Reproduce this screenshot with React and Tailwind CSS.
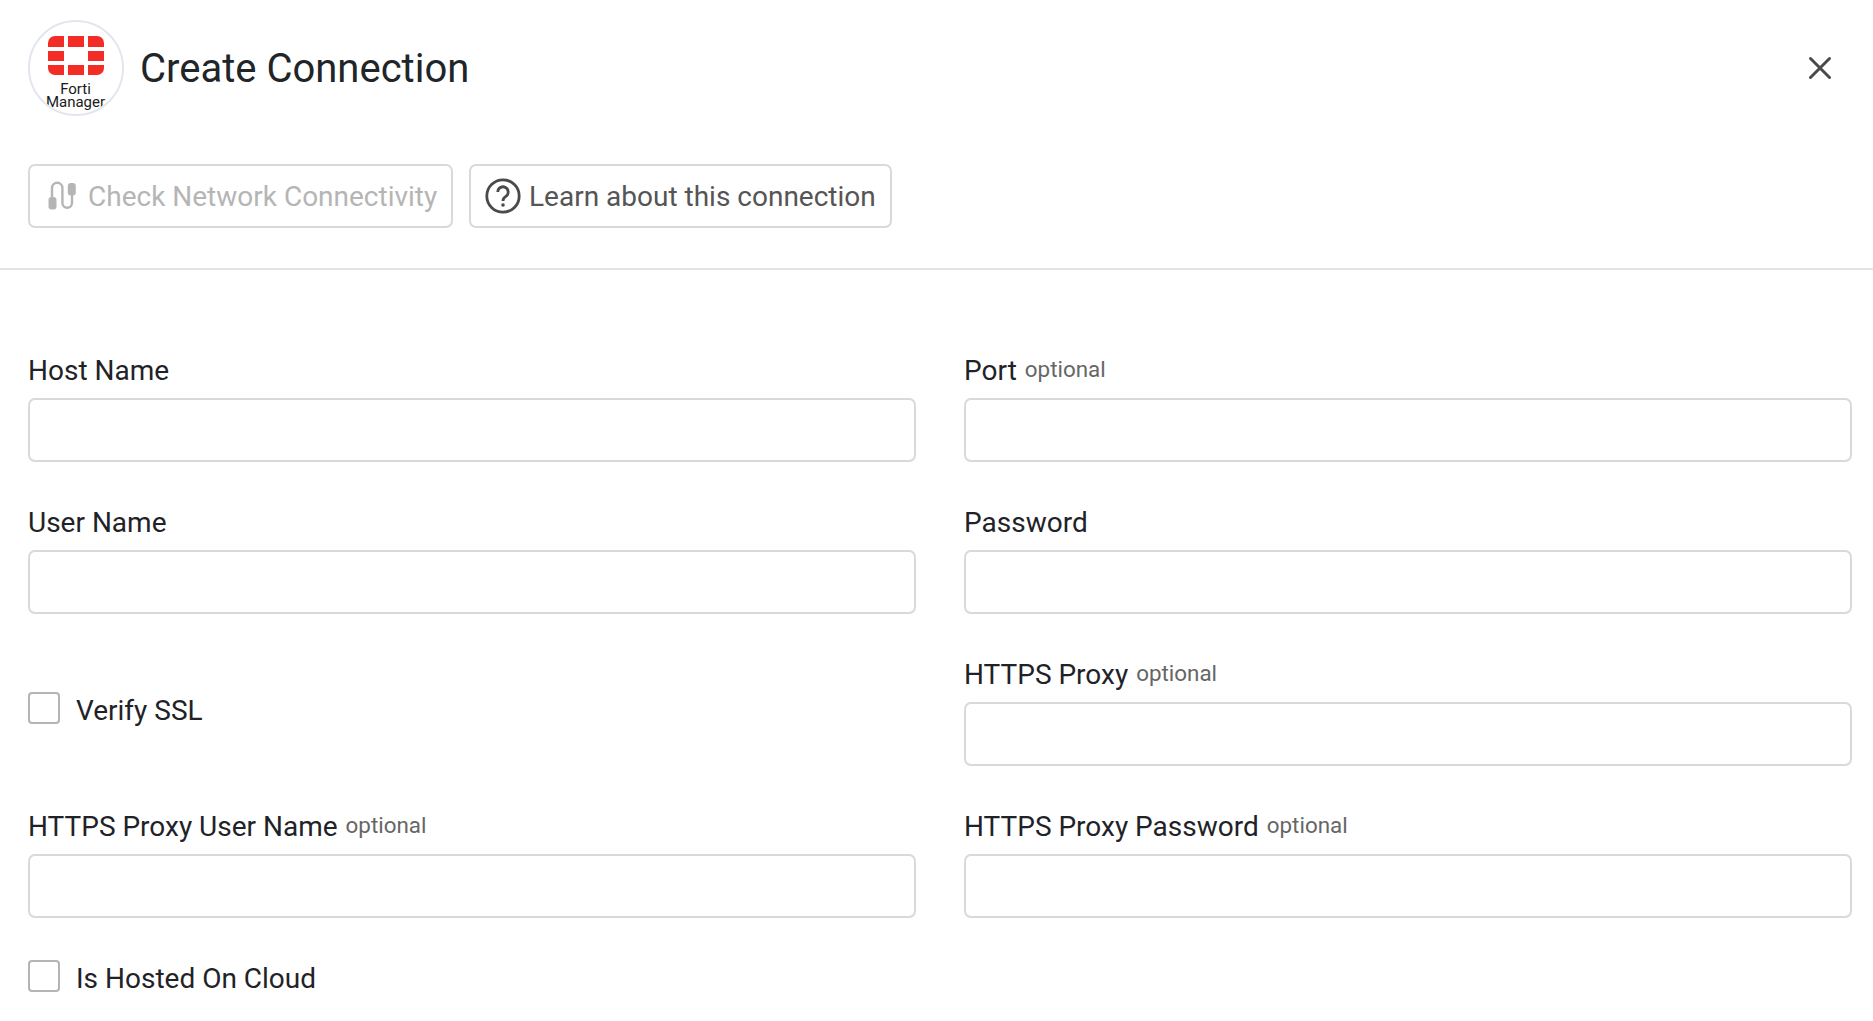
const Logo = () => (
  <div className="w-[96px] h-[96px] rounded-full border-2 border-[#e2e6ee] flex flex-col items-center shrink-0 overflow-hidden pt-[14px]">
    <svg width="56" height="39" viewBox="0 0 56 39" className="shrink-0">
      <g fill="#f32d26">
        <path d="M0 11V7a7 7 0 0 1 7-7h9v11z" />
        <rect x="20" y="0" width="16" height="11" />
        <path d="M40 0h9a7 7 0 0 1 7 7v4H40z" />
        <rect x="0" y="15" width="16" height="10" />
        <rect x="40" y="15" width="16" height="10" />
        <path d="M0 29h16v10H7a7 7 0 0 1-7-7z" />
        <rect x="20" y="29" width="16" height="10" />
        <path d="M40 29h16v3a7 7 0 0 1-7 7h-9z" />
      </g>
    </svg>
    <div className="text-[15px] leading-[13px] text-[#1a1a1a] text-center mt-[8px] -ml-[1px]">
      Forti
      <br />
      Manager
    </div>
  </div>
);

const Label = ({ text, optional }) => (
  <div className="flex items-center h-[34px] text-[#1f2328] text-[28px] leading-[34px] pt-[2px]">
    <span>{text}</span>
    {optional && <span className="ml-[8px] mb-[4px] text-[22.4px] text-[#666666]">optional</span>}
  </div>
);

const Field = ({ text, optional }) => (
  <div className="flex flex-col gap-[11px]">
    <Label text={text} optional={optional} />
    <div className="h-[64px] rounded-[7px] border-2 border-[#d9d9d9] bg-white" />
  </div>
);

const Check = ({ text, className, boxClass }) => (
  <div className={`flex items-center gap-[16px] ${className}`}>
    <div className={`w-[32px] h-[32px] rounded-[4px] border-2 border-[#b4b4b4] bg-white shrink-0 ${boxClass}`} />
    <span className="text-[28px] leading-[34px] text-[#1f2328] pt-[2px]">{text}</span>
  </div>
);

export default function App() {
  return (
    <div className="w-[1873px] h-[1021px] bg-white overflow-hidden font-['Roboto',sans-serif]">
      <div className="border-b-2 border-[#e4e4e4] pl-[28px] pr-[21px] pt-[20px] h-[270px]">
        <div className="flex items-center justify-between h-[96px]">
          <div className="flex items-center gap-[16px]">
            <Logo />
            <h1 className="text-[40px] leading-[48px] text-[#212529] pt-[2px]">Create Connection</h1>
          </div>
          <svg width="24" height="24" viewBox="0 0 24 24" className="mr-[20px]" fill="none" stroke="#4a4a4a" strokeWidth="3" strokeLinecap="round">
            <path d="M2.5 2.5l19 19M21.5 2.5l-19 19" />
          </svg>
        </div>
        <div className="flex gap-[16px] mt-[48px]">
          <div className="h-[64px] w-[425px] rounded-[7px] border-2 border-[#d9d9d9] flex items-center pl-[18px] gap-[10px] text-[#b5b5b5] text-[28px]">
            <svg width="30" height="32" viewBox="0 0 30 32" fill="none" className="shrink-0">
              <path d="M4 24V8a5.2 5.2 0 0 1 10.4 0V23a4.8 4.8 0 0 0 9.6 0V8" stroke="#b5b5b5" strokeWidth="2.4" />
              <rect x="0.5" y="17" width="8" height="12.5" rx="3" fill="#b5b5b5" />
              <rect x="19.8" y="3" width="8" height="12.5" rx="3" fill="#b5b5b5" />
            </svg>
            <span className="pt-[1px]">Check Network Connectivity</span>
          </div>
          <div className="h-[64px] w-[423px] rounded-[7px] border-2 border-[#d9d9d9] flex items-center pl-[14px] gap-[8px] text-[#555555] text-[28px]">
            <svg width="36" height="36" viewBox="0 0 36 36" fill="none" className="shrink-0">
              <circle cx="18" cy="18" r="16.2" stroke="#4a4a4a" strokeWidth="2.8" />
              <path d="M12.8 14a5.2 5.2 0 1 1 8 4.4c-1.8 1.2-2.8 2.2-2.8 4.6" stroke="#4a4a4a" strokeWidth="2.8" />
              <circle cx="18" cy="27" r="1.8" fill="#4a4a4a" />
            </svg>
            <span className="pt-[1px]">Learn about this connection</span>
          </div>
        </div>
      </div>
      <div className="pl-[28px] pr-[21px] pt-[83px] grid grid-cols-2 gap-x-[48px] gap-y-[43px]">
        <Field text="Host Name" />
        <Field text="Port" optional />
        <Field text="User Name" />
        <Field text="Password" />
        <Check text="Verify SSL" className="self-center -mt-[4px]" boxClass="-mt-[4px]" />
        <Field text="HTTPS Proxy" optional />
        <Field text="HTTPS Proxy User Name" optional />
        <Field text="HTTPS Proxy Password" optional />
        <Check text="Is Hosted On Cloud" className="mt-[-1px]" boxClass="-mt-[5px]" />
      </div>
    </div>
  );
}
